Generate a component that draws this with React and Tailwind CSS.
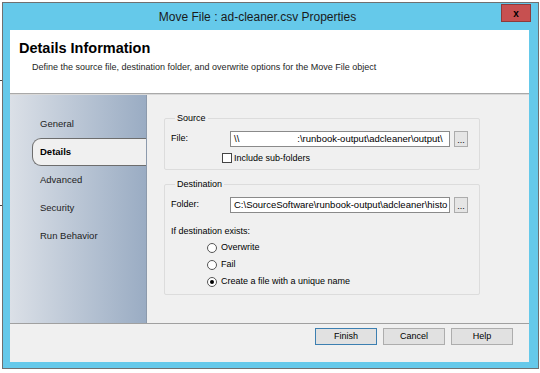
import React from "react";

const font = { fontFamily: '"Liberation Sans", Arial, sans-serif' };

function NavItem({ label, active }) {
	if (active) {
		return (
			<div className="h-[28px] ml-[22px] flex items-center pl-[7px] bg-[#f0f0f0] border border-r-0 border-[#6d6d6d] rounded-l-[9px] text-[9.5px] font-bold text-black">
				{label}
			</div>
		);
	}
	return (
		<div className="h-[28px] flex items-center pl-[30px] text-[9.5px] text-[#1e1e1e]">
			{label}
		</div>
	);
}

function TextBox({ value }) {
	return (
		<div className="flex items-center gap-[4px]">
			<div className="w-[220px] h-[16px] bg-white border border-[#8a8a8a] overflow-hidden whitespace-pre pl-[3px] text-[9.5px] leading-[14px] text-black">
				{value}
			</div>
			<div className="w-[14px] h-[16px] bg-[#e5e5e5] border border-[#acacac] flex items-end justify-center text-[9px] leading-[11px] text-black">
				...
			</div>
		</div>
	);
}

function Radio({ label, checked }) {
	return (
		<div className="h-[17px] flex items-center pl-[36px] gap-[4px] text-[9px] text-black">
			<div className="w-[10px] h-[10px] rounded-full bg-white border border-[#555] flex items-center justify-center">
				{checked && <div className="w-[4px] h-[4px] rounded-full bg-black" />}
			</div>
			{label}
		</div>
	);
}

function Button({ label, primary }) {
	return (
		<div
			className={`w-[62px] h-[17px] flex items-center justify-center bg-[#e1e1e1] border text-[9px] text-black ${
				primary ? "border-[#3c7fb1]" : "border-[#adadad]"
			}`}
		>
			{label}
		</div>
	);
}

export default function App() {
	return (
		<div className="w-[540px] h-[373px] bg-white flex overflow-hidden" style={font}>
			<div className="w-[2px] shrink-0">
				<div className="h-[80px]" />
				<div className="h-[1px] bg-[#444]" />
				<div className="h-[124px]" />
				<div className="h-[1px] bg-[#444]" />
			</div>

			<div className="mt-[2px] w-[537px] h-[367px] border border-[#707070] bg-[#65c9ea] flex flex-col pl-[7px] pr-[9px] pb-[6px]">
				{/* title bar */}
				<div className="h-[27px] shrink-0 flex items-start">
					<div className="flex-1 h-full flex items-center justify-center pl-[4px] text-[12px] text-[#1a1a1a]">
						Move File : ad-cleaner.csv Properties
					</div>
					<div className="w-[30px] h-[18px] mt-[1px] -mr-[2px] bg-[#c75050] border border-[#8e3a3a] flex items-center justify-center text-[10px] font-bold text-black">
						x
					</div>
				</div>

				{/* client */}
				<div className="flex-1 flex flex-col bg-[#f0f0f0]">
					<div className="h-[63px] bg-white pl-[9px] pt-[9px]">
						<div className="text-[14.5px] font-bold text-black leading-[18px]">Details Information</div>
						<div className="mt-[4px] ml-[13px] text-[9px] text-[#1e1e1e]">
							Define the source file, destination folder, and overwrite options for the Move File object
						</div>
					</div>
					<div className="h-[1px] bg-[#a9a9a9]" />
					<div className="h-[1px] bg-[#d9d9d9]" />

					<div className="h-[228px] flex">
						<div className="w-[137px] bg-gradient-to-r from-[#dbe0e7] to-[#9aacc3] border-r border-[#8c9aac] pt-[15px]">
							<NavItem label="General" />
							<NavItem label="Details" active />
							<NavItem label="Advanced" />
							<NavItem label="Security" />
							<NavItem label="Run Behavior" />
						</div>

						<div className="flex-1 pl-[17px] pt-[17px]">
							<fieldset className="w-[316px] h-[58px] border border-[#dcdcdc] rounded-[2px] pl-[6px]">
								<legend className="ml-[4px] px-[2px] text-[9px] text-black">Source</legend>
								<div className="flex items-center mt-[5px]">
									<div className="w-[59px] text-[9px] text-black">File:</div>
									<TextBox value={"\\\\                      :\\runbook-output\\adcleaner\\output\\"} />
								</div>
								<div className="flex items-center mt-[5px] pl-[51px] gap-[2px] text-[9px] text-black">
									<div className="w-[10px] h-[10px] bg-white border border-[#444]" />
									Include sub-folders
								</div>
							</fieldset>

							<fieldset className="mt-[8px] w-[316px] h-[117px] border border-[#dcdcdc] rounded-[2px] pl-[6px]">
								<legend className="ml-[4px] px-[2px] text-[9px] text-black">Destination</legend>
								<div className="flex items-center mt-[5px]">
									<div className="w-[59px] text-[9px] text-black">Folder:</div>
									<TextBox value={"C:\\SourceSoftware\\runbook-output\\adcleaner\\histo"} />
								</div>
								<div className="mt-[12px] text-[9px] text-black">If destination exists:</div>
								<div className="mt-[1px]">
									<Radio label="Overwrite" />
									<Radio label="Fail" />
									<Radio label="Create a file with a unique name" checked />
								</div>
							</fieldset>
						</div>
					</div>

					<div className="h-[1px] bg-[#a0a0a0]" />
					<div className="flex-1 flex justify-end gap-[6px] pr-[16px] pt-[4px]">
						<Button label="Finish" primary />
						<Button label="Cancel" />
						<Button label="Help" />
					</div>
				</div>
			</div>
		</div>
	);
}
